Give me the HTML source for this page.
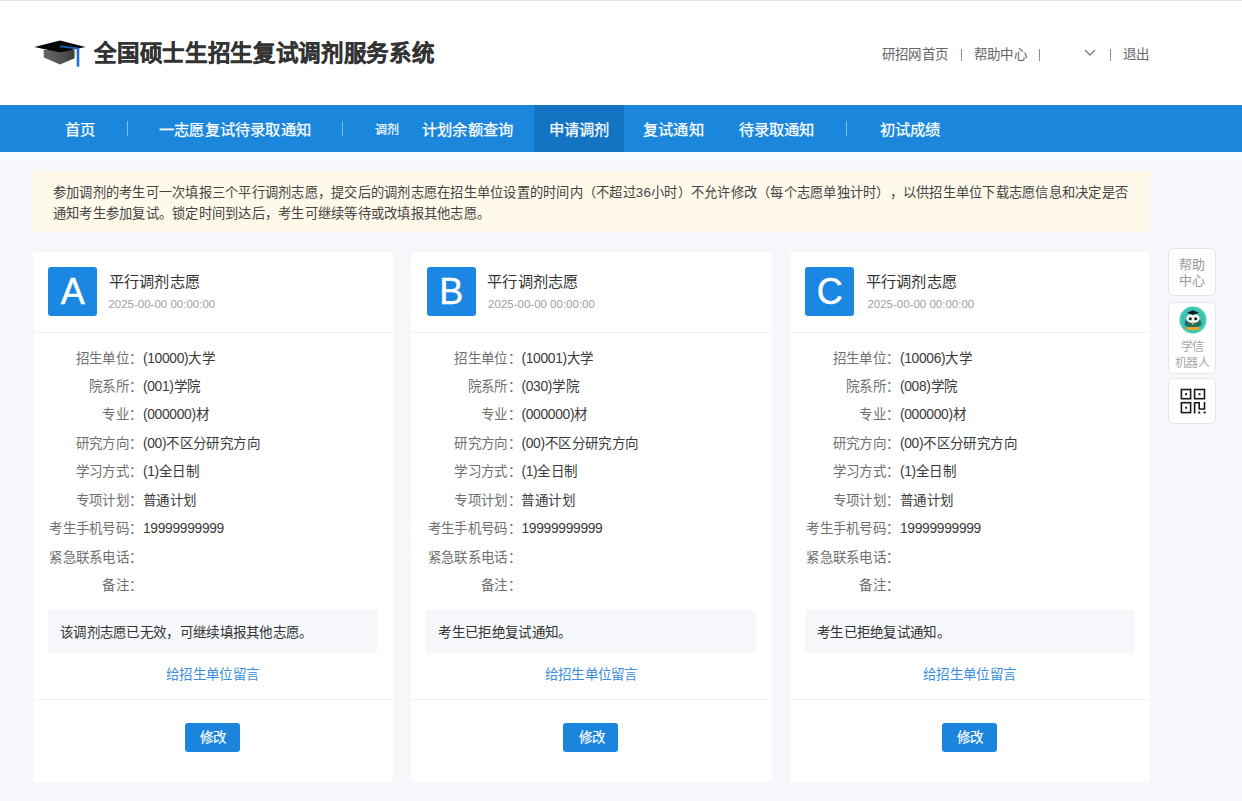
<!DOCTYPE html>
<html lang="zh-CN">
<head>
<meta charset="utf-8">
<style>
*{margin:0;padding:0;box-sizing:border-box}
html,body{width:1242px;height:801px;overflow:hidden}
body{position:relative;background:#f5f7fa;font-family:"Liberation Sans",sans-serif;color:#333;text-spacing-trim:space-all}
.a{position:absolute;white-space:nowrap}
#hdr{position:absolute;left:0;top:0;width:1242px;height:105px;background:#fff;border-top:1px solid #e4e4e4}
#title{left:94.3px;top:38.4px;font-size:22.5px;letter-spacing:-0.32px;font-weight:bold;-webkit-text-stroke:0.3px #333;line-height:32px;color:#333}
.hl{font-size:13.5px;letter-spacing:0.3px;line-height:20px;color:#666;top:44.6px}
.hs{position:absolute;top:49px;width:1.2px;height:12px;background:#8c8c8c}
#nav{position:absolute;left:0;top:105px;width:1242px;height:47px;background:#1a87dd}
#active{position:absolute;left:533.5px;top:105px;width:90.7px;height:47px;background:#1474c4}
.nt{position:absolute;top:119.6px;line-height:20px;font-size:15.25px;letter-spacing:0.2px;color:#fff;-webkit-text-stroke:0.25px #fff;white-space:nowrap}
.ns{position:absolute;top:121.3px;width:1.2px;height:14.7px;background:#7cbff2}
#notice{position:absolute;left:32px;top:171.3px;width:1118px;height:60.7px;background:#fff9ea}
#ntx{position:absolute;left:52.8px;top:181.8px;width:1090px;font-size:13.25px;letter-spacing:0.25px;line-height:21px;color:#444}
.card{position:absolute;top:252px;width:360.5px;height:530px;background:#fff;border-radius:3px}
.hd{position:absolute;left:0;top:79.5px;width:100%;height:1px;background:#eff0f2}
.lt{position:absolute;left:15.8px;top:15.3px;width:49px;height:49px;border-radius:3px;background:#1a88e2;color:#fff;font-size:36px;-webkit-text-stroke:0.4px #fff;line-height:49px;text-align:center}
.ct{position:absolute;left:76.3px;top:20.06px;font-size:15.25px;letter-spacing:0.2px;line-height:20px;color:#333;white-space:nowrap}
.dt{position:absolute;left:75.9px;top:44px;font-size:11.5px;line-height:16px;color:#a0a0a0;white-space:nowrap}
.rl{position:absolute;right:250.7px;line-height:20px;font-size:13.5px;letter-spacing:0.3px;color:#707070;white-space:nowrap;text-align:right}
.rv{position:absolute;left:110.4px;line-height:20px;font-size:13.5px;letter-spacing:0.4px;color:#3a3a3a;white-space:nowrap}
.n{font-size:13.8px;letter-spacing:-0.3px}
.st{position:absolute;left:15.4px;top:358.3px;width:329.6px;height:42.5px;background:#f5f7fa}
.st span{position:absolute;left:12.1px;top:12.3px;line-height:20px;font-size:13.5px;letter-spacing:0.3px;color:#333;white-space:nowrap}
.lk{position:absolute;left:0;top:413.2px;width:100%;text-align:center;line-height:20px;font-size:13.5px;letter-spacing:0.3px;color:#3b8ddf;white-space:nowrap}
.dv{position:absolute;left:0;top:446.8px;width:100%;height:1.5px;background:#f0f1f2}
.btn{position:absolute;left:152.2px;top:470.5px;width:55.3px;height:29.5px;border-radius:3px;background:#1b84dd;color:#fff;-webkit-text-stroke:0.2px #fff;font-size:13.5px;letter-spacing:0.3px;line-height:30.5px;text-align:center;white-space:nowrap;padding-left:2px}
.tb{position:absolute;left:1168.4px;width:47.8px;background:#fff;border:1px solid #e6e7e9;border-radius:5px}
.tt{position:absolute;left:0;width:100%;text-align:center;font-size:13px;line-height:16px;color:#999;white-space:nowrap}
</style>
</head>
<body>
<div id="hdr"></div>
<svg class="a" style="left:0;top:0" width="100" height="80" viewBox="0 0 100 80">
  <defs><linearGradient id="hb" x1="0" x2="1" y1="0" y2="0"><stop offset="0" stop-color="#666"/><stop offset="0.55" stop-color="#555"/><stop offset="1" stop-color="#3a3a36"/></linearGradient></defs>
  <polygon points="43.6,50 74.5,50 74.6,58.3 60,64.5 43.8,57.6" fill="url(#hb)"/>
  <polygon points="34.3,46.9 60,40.4 85.6,46.9 60,52.6" fill="#070707"/>
  <path d="M60,46.3 L78,48.5" stroke="#1b5cb5" stroke-width="1.8" fill="none"/>
  <path d="M78,48.2 L78,66.7" stroke="#1d6fd4" stroke-width="2.6" fill="none"/>
  <path d="M75.2,51.5 L76.6,55.5" stroke="#e0d090" stroke-width="1.3"/>
</svg>
<div id="title" class="a">全国硕士生招生复试调剂服务系统</div>
<div class="a hl" style="left:881.7px">研招网首页</div>
<div class="hs" style="left:960.5px"></div>
<div class="a hl" style="left:973.9px">帮助中心</div>
<div class="hs" style="left:1039.3px"></div>
<svg class="a" style="left:1083px;top:48px" width="14" height="10" viewBox="0 0 14 10"><path d="M2,2 L7,7 L12,2" stroke="#7a7a7a" stroke-width="1.3" fill="none"/></svg>
<div class="hs" style="left:1109.8px"></div>
<div class="a hl" style="left:1122.6px">退出</div>

<div id="nav"></div>
<div id="active"></div>
<div style="position:absolute;left:0;top:152px;width:1242px;height:11px;background:linear-gradient(#f8fdff 0%,#f9fbfd 45%,#f5f7fa 100%)"></div>
<div class="nt" style="left:65.2px">首页</div>
<div class="ns" style="left:126.5px"></div>
<div class="nt" style="left:159px">一志愿复试待录取通知</div>
<div class="ns" style="left:342px"></div>
<div class="nt" style="left:375.3px;font-size:12px;letter-spacing:-0.6px;color:#e6f1fb">调剂</div>
<div class="nt" style="left:422px">计划余额查询</div>
<div class="nt" style="left:548.8px">申请调剂</div>
<div class="nt" style="left:643px">复试通知</div>
<div class="nt" style="left:738.5px">待录取通知</div>
<div class="ns" style="left:845.5px"></div>
<div class="nt" style="left:879.5px">初试成绩</div>

<div id="notice"></div>
<div id="ntx" class="a" style="white-space:normal">参加调剂的考生可一次填报三个平行调剂志愿，提交后的调剂志愿在招生单位设置的时间内（不超过36小时）不允许修改（每个志愿单独计时），以供招生单位下载志愿信息和决定是否<br>通知考生参加复试。锁定时间到达后，考生可继续等待或改填报其他志愿。</div>

<div class="card" style="left:32.5px"><div class="hd"></div><div class="lt">A</div><div class="ct">平行调剂志愿</div><div class="dt" style="left:75.9px">2025-00-00 00:00:00</div><div class="rl" style="top:96.60px">招生单位：</div><div class="rv" style="top:96.60px"><span class="n">(10000)</span>大学</div><div class="rl" style="top:125.04px">院系所：</div><div class="rv" style="top:125.04px"><span class="n">(001)</span>学院</div><div class="rl" style="top:153.48px">专业：</div><div class="rv" style="top:153.48px"><span class="n">(000000)</span>材</div><div class="rl" style="top:181.92px">研究方向：</div><div class="rv" style="top:181.92px"><span class="n">(00)</span>不区分研究方向</div><div class="rl" style="top:210.36px">学习方式：</div><div class="rv" style="top:210.36px"><span class="n">(1)</span>全日制</div><div class="rl" style="top:238.80px">专项计划：</div><div class="rv" style="top:238.80px">普通计划</div><div class="rl" style="top:267.24px">考生手机号码：</div><div class="rv" style="top:267.24px"><span class="n">19999999999</span></div><div class="rl" style="top:295.68px">紧急联系电话：</div><div class="rl" style="top:324.12px">备注：</div><div class="st"><span>该调剂志愿已无效，可继续填报其他志愿。</span></div><div class="lk">给招生单位留言</div><div class="dv"></div><div class="btn">修改</div></div>
<div class="card" style="left:411px"><div class="hd"></div><div class="lt">B</div><div class="ct">平行调剂志愿</div><div class="dt" style="left:77.1px">2025-00-00 00:00:00</div><div class="rl" style="top:96.60px">招生单位：</div><div class="rv" style="top:96.60px"><span class="n">(10001)</span>大学</div><div class="rl" style="top:125.04px">院系所：</div><div class="rv" style="top:125.04px"><span class="n">(030)</span>学院</div><div class="rl" style="top:153.48px">专业：</div><div class="rv" style="top:153.48px"><span class="n">(000000)</span>材</div><div class="rl" style="top:181.92px">研究方向：</div><div class="rv" style="top:181.92px"><span class="n">(00)</span>不区分研究方向</div><div class="rl" style="top:210.36px">学习方式：</div><div class="rv" style="top:210.36px"><span class="n">(1)</span>全日制</div><div class="rl" style="top:238.80px">专项计划：</div><div class="rv" style="top:238.80px">普通计划</div><div class="rl" style="top:267.24px">考生手机号码：</div><div class="rv" style="top:267.24px"><span class="n">19999999999</span></div><div class="rl" style="top:295.68px">紧急联系电话：</div><div class="rl" style="top:324.12px">备注：</div><div class="st"><span>考生已拒绝复试通知。</span></div><div class="lk">给招生单位留言</div><div class="dv"></div><div class="btn">修改</div></div>
<div class="card" style="left:789.5px"><div class="hd"></div><div class="lt">C</div><div class="ct">平行调剂志愿</div><div class="dt" style="left:77.9px">2025-00-00 00:00:00</div><div class="rl" style="top:96.60px">招生单位：</div><div class="rv" style="top:96.60px"><span class="n">(10006)</span>大学</div><div class="rl" style="top:125.04px">院系所：</div><div class="rv" style="top:125.04px"><span class="n">(008)</span>学院</div><div class="rl" style="top:153.48px">专业：</div><div class="rv" style="top:153.48px"><span class="n">(000000)</span>材</div><div class="rl" style="top:181.92px">研究方向：</div><div class="rv" style="top:181.92px"><span class="n">(00)</span>不区分研究方向</div><div class="rl" style="top:210.36px">学习方式：</div><div class="rv" style="top:210.36px"><span class="n">(1)</span>全日制</div><div class="rl" style="top:238.80px">专项计划：</div><div class="rv" style="top:238.80px">普通计划</div><div class="rl" style="top:267.24px">考生手机号码：</div><div class="rv" style="top:267.24px"><span class="n">19999999999</span></div><div class="rl" style="top:295.68px">紧急联系电话：</div><div class="rl" style="top:324.12px">备注：</div><div class="st"><span>考生已拒绝复试通知。</span></div><div class="lk">给招生单位留言</div><div class="dv"></div><div class="btn">修改</div></div>


<div class="tb" style="top:248.1px;height:48.4px"><div class="tt" style="top:7.5px">帮助<br>中心</div></div>
<div class="tb" style="top:301.5px;height:72px">
  <svg class="a" style="left:9.5px;top:3.5px" width="28" height="28" viewBox="0 0 28 28">
    <circle cx="14" cy="14" r="13.5" fill="#46cbb6"/>
    <circle cx="14" cy="14" r="11.5" fill="#3cc1ad"/>
    <path d="M5.5,19 Q6,12 10,11 L18,11 Q22,12 22.5,19 Q14,25 5.5,19 Z" fill="#1d6b63"/>
    <ellipse cx="14" cy="12.6" rx="6.8" ry="4.6" fill="#eef4f4"/>
    <circle cx="11.3" cy="12.8" r="1.5" fill="#1a1a1a"/><circle cx="16.7" cy="12.8" r="1.5" fill="#1a1a1a"/>
    <polygon points="8,6.8 14,4.2 20,6.8 14,9" fill="#141826"/>
    <polygon points="12.6,16 15.4,16 14,19.5" fill="#f2c23a"/>
    <rect x="7.5" y="21" width="13" height="3" rx="1" fill="#f0a328"/>
  </svg>
  <div class="tt" style="top:37.5px;color:#a8a8a8;font-size:12px;letter-spacing:-0.3px;line-height:15.5px">学信<br>机器人</div>
</div>
<div class="tb" style="top:378.3px;height:45.5px">
  <svg class="a" style="left:0;top:0" width="48" height="46" viewBox="1168.4 378.3 48 46">
    <g fill="none" stroke="#1a1a1a" stroke-width="1.6">
      <rect x="1180.8" y="388.8" width="9.2" height="9.2"/>
      <rect x="1194" y="388.8" width="9.9" height="9.2"/>
      <rect x="1180.8" y="402" width="9.2" height="9.9"/>
      <path d="M1194,412.7 L1194,402 L1198.6,402 L1198.6,408.3 L1203.9,408.3 L1203.9,401.3"/>
    </g>
    <g fill="#1a1a1a">
      <rect x="1184.5" y="392.5" width="2" height="2"/>
      <rect x="1197.9" y="392.5" width="2" height="2"/>
      <rect x="1184.5" y="406" width="2" height="2"/>
      <rect x="1197.6" y="410.8" width="2" height="2"/>
      <rect x="1203" y="410.8" width="2" height="2"/>
    </g>
  </svg>
</div>
</body>
</html>
